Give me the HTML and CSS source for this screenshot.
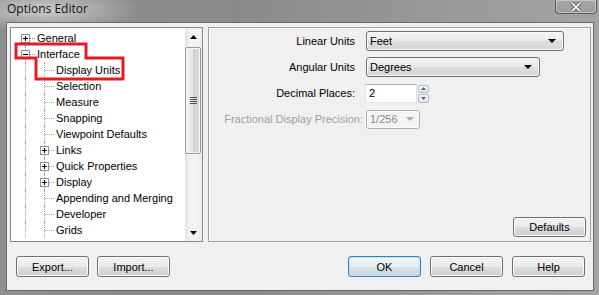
FILE: index.html
```html
<!DOCTYPE html>
<html lang="en">
<head>
  <meta charset="UTF-8">
  <title>Options Editor</title>
  <link rel="stylesheet" href="styles.css">
</head>
<body>

  <div class="window">
    <div class="titlebar">
      <span class="title">Options Editor</span>
      <div class="close">
        <svg width="14" height="10" viewBox="0 0 14 10">
          <path d="M3 1 L11 9 M11 1 L3 9" stroke="#4a4a4a" stroke-width="3.4" fill="none"/>
          <path d="M3 1 L11 9 M11 1 L3 9" stroke="#f4f4f4" stroke-width="1.8" fill="none"/>
        </svg>
      </div>
    </div>

    <div class="client">
      <div class="panels">

        <!-- options tree -->
        <div class="tree">
          <div class="tree-list">
            <div class="node"><span class="cell down h"><svg class="box" width="9" height="9"><rect x="0.5" y="0.5" width="8" height="8" fill="#fff" stroke="#919191"/><path d="M2 4.5h5M4.5 2v5" stroke="#000"/></svg></span><span class="label">General</span></div>
            <div class="node"><span class="cell v h"><svg class="box" width="9" height="9"><rect x="0.5" y="0.5" width="8" height="8" fill="#fff" stroke="#919191"/><path d="M2 4.5h5" stroke="#000"/></svg></span><span class="label">Interface</span></div>
            <div class="node"><span class="cell v"></span><span class="cell v h"></span><span class="label">Display Units</span></div>
            <div class="node"><span class="cell v"></span><span class="cell v h"></span><span class="label">Selection</span></div>
            <div class="node"><span class="cell v"></span><span class="cell v h"></span><span class="label">Measure</span></div>
            <div class="node"><span class="cell v"></span><span class="cell v h"></span><span class="label">Snapping</span></div>
            <div class="node"><span class="cell v"></span><span class="cell v h"></span><span class="label">Viewpoint Defaults</span></div>
            <div class="node"><span class="cell v"></span><span class="cell v h"><svg class="box" width="9" height="9"><rect x="0.5" y="0.5" width="8" height="8" fill="#fff" stroke="#919191"/><path d="M2 4.5h5M4.5 2v5" stroke="#000"/></svg></span><span class="label">Links</span></div>
            <div class="node"><span class="cell v"></span><span class="cell v h"><svg class="box" width="9" height="9"><rect x="0.5" y="0.5" width="8" height="8" fill="#fff" stroke="#919191"/><path d="M2 4.5h5M4.5 2v5" stroke="#000"/></svg></span><span class="label">Quick Properties</span></div>
            <div class="node"><span class="cell v"></span><span class="cell v h"><svg class="box" width="9" height="9"><rect x="0.5" y="0.5" width="8" height="8" fill="#fff" stroke="#919191"/><path d="M2 4.5h5M4.5 2v5" stroke="#000"/></svg></span><span class="label">Display</span></div>
            <div class="node"><span class="cell v"></span><span class="cell v h"></span><span class="label">Appending and Merging</span></div>
            <div class="node"><span class="cell v"></span><span class="cell v h"></span><span class="label">Developer</span></div>
            <div class="node"><span class="cell v"></span><span class="cell v h"></span><span class="label">Grids</span></div>
          </div>

          <div class="scrollbar">
            <div class="arrow"><svg width="7" height="4"><path d="M0 4h7L3.5 0z" fill="#000"/></svg></div>
            <div class="track">
              <div class="thumb"><span class="grip"></span></div>
            </div>
            <div class="arrow"><svg width="7" height="4"><path d="M0 0h7L3.5 4z" fill="#000"/></svg></div>
          </div>

          <!-- red markup drawn over the tree -->
          <svg class="mark" width="193" height="215">
            <path d="M6 17H76V31H113V52H26V31H6Z" fill="none" stroke="#e31b23" stroke-width="3"/>
          </svg>
        </div>

        <!-- settings page -->
        <div class="page">
          <div class="form">
            <div class="row">
              <span class="field-label">Linear Units</span>
              <div class="combo combo-linear"><span>Feet</span><svg width="8" height="4"><path d="M0 0h8L4 4z" fill="#000"/></svg></div>
            </div>
            <div class="row">
              <span class="field-label">Angular Units</span>
              <div class="combo combo-angular"><span>Degrees</span><svg width="8" height="4"><path d="M0 0h8L4 4z" fill="#000"/></svg></div>
            </div>
            <div class="row">
              <span class="field-label">Decimal Places:</span>
              <div class="spin">
                <div class="spin-input">2</div>
                <div class="spin-buttons">
                  <div class="spin-btn"><svg width="5" height="3"><path d="M0 3h5L2.5 0z" fill="#4d6185"/></svg></div>
                  <div class="spin-btn"><svg width="5" height="3"><path d="M0 0h5L2.5 3z" fill="#4d6185"/></svg></div>
                </div>
              </div>
            </div>
            <div class="row">
              <span class="field-label disabled wide">Fractional Display Precision:</span>
              <div class="combo combo-disabled"><span>1/256</span><svg width="8" height="4"><path d="M0 0h8L4 4z" fill="#a8a8a8"/></svg></div>
            </div>
          </div>

          <div class="page-foot">
            <button class="btn">Defaults</button>
          </div>
        </div>
      </div>

      <div class="buttons">
        <div class="group">
          <button class="btn">Export...</button>
          <button class="btn">Import...</button>
        </div>
        <div class="group">
          <button class="btn default">OK</button>
          <button class="btn">Cancel</button>
          <button class="btn">Help</button>
        </div>
      </div>
    </div>
  </div>

</body>
</html>
```

FILE: styles.css
```css
/* General Styles */
* {
  margin: 0;
  padding: 0;
  box-sizing: border-box;
  font-family: "Liberation Sans", Arial, sans-serif;
}

body {
  width: 599px;
  height: 295px;
  overflow: hidden;
  background-color: #8c8c8c;
}

/* Window frame */
.window {
  width: 599px;
  height: 295px;
  display: flex;
  flex-direction: column;
  padding: 0 5px 4px 6px;
  background:
    radial-gradient(ellipse 95px 22px at 45px 10px, rgba(225, 225, 225, 0.75), rgba(225, 225, 225, 0) 100%),
    linear-gradient(to right, #8e8e8e 0%, #8a8a8a 40%, #9a9a9a 75%, #a3a3a3 100%);
}

.titlebar {
  height: 22px;
  flex: none;
  display: flex;
  justify-content: space-between;
  align-items: flex-start;
}

.title {
  font-family: "Open Sans", "Liberation Sans", sans-serif;
  font-size: 12px;
  line-height: 18px;
  margin-left: 1px;
  color: #111;
}

.close {
  width: 42px;
  height: 14px;
  margin-right: -3px;
  border: 1px solid #5e5e5e;
  border-top: none;
  border-radius: 0 0 4px 4px;
  background: linear-gradient(#a6a6a6, #9d9d9d);
  box-shadow: inset 0 0 0 1px rgba(235, 235, 235, 0.45);
  display: flex;
  justify-content: center;
  align-items: center;
}

/* Client area */
.client {
  flex: 1;
  background-color: #f0f0f0;
  border: 1px solid #6a6a6a;
  padding: 4px 2px 0 3px;
  display: flex;
  flex-direction: column;
}

.panels {
  height: 215px;
  display: flex;
  gap: 5px;
}

/* Tree */
.tree {
  position: relative;
  width: 193px;
  background-color: white;
  border: 1px solid #828790;
  display: flex;
}

.tree-list {
  flex: 1;
  padding: 2px 0 0 5px;
  overflow: hidden;
}

.node {
  display: flex;
  height: 16px;
  font-size: 11px;
  line-height: 16px;
  color: #000;
}

.cell {
  position: relative;
  width: 19px;
  height: 16px;
  flex: none;
}

.cell.v::before,
.cell.down::before {
  content: "";
  position: absolute;
  left: 9px;
  top: 0;
  bottom: 0;
  border-left: 1px dotted #a0a0a0;
}

.cell.down::before {
  top: 8px;
}

.cell.h::after {
  content: "";
  position: absolute;
  left: 10px;
  right: 0;
  top: 8px;
  border-top: 1px dotted #a0a0a0;
}

.box {
  position: absolute;
  left: 5px;
  top: 4px;
  z-index: 1;
}

.label {
  margin-left: 2px;
  white-space: nowrap;
}

.scrollbar {
  width: 17px;
  flex: none;
  display: flex;
  flex-direction: column;
  background: linear-gradient(to right, #e3e3e3, #f3f3f3 30%, #f3f3f3 70%, #ececec);
}

.arrow {
  height: 17px;
  flex: none;
  display: flex;
  justify-content: center;
  align-items: center;
}

.track {
  flex: 1;
  padding-top: 2px;
}

.thumb {
  margin: 0 1px 0 0;
  height: 107px;
  border: 1px solid #979797;
  border-radius: 2px;
  background: linear-gradient(to right, #f1f1f1, #e4e4e4 50%, #d2d2d2 51%, #dadada);
  box-shadow: inset 0 0 0 1px #f8f8f8;
  display: flex;
  justify-content: center;
  align-items: center;
}

.grip {
  width: 7px;
  height: 7px;
  background: repeating-linear-gradient(#555 0, #555 1px, transparent 1px, transparent 2px);
}

.mark {
  position: absolute;
  left: -1px;
  top: -1px;
  z-index: 2;
  pointer-events: none;
}

/* Settings page */
.page {
  width: 383px;
  border: 1px solid #a0a0a0;
  box-shadow: inset 1px 1px 0 #ffffff;
  display: flex;
  flex-direction: column;
  justify-content: space-between;
}

.form {
  padding-top: 3px;
  display: flex;
  flex-direction: column;
  gap: 6px;
}

.row {
  display: flex;
  align-items: center;
  height: 20px;
  font-size: 11px;
}

.field-label {
  width: 154px;
  padding-right: 8px;
  margin-right: 3px;
  text-align: right;
  white-space: nowrap;
  color: #000;
}

.field-label.wide {
  padding-right: 0;
}

.field-label.disabled {
  color: #a0a0a0;
}

.combo {
  height: 20px;
  border: 1px solid #707070;
  border-radius: 3px;
  background: linear-gradient(#f2f2f2 0%, #ebebeb 50%, #dddddd 51%, #d6d6d6 100%);
  box-shadow: inset 0 0 0 1px #fafafa;
  display: flex;
  align-items: center;
  justify-content: space-between;
  padding: 0 7px 0 3px;
  color: #000;
}

.combo-linear {
  width: 198px;
}

.combo-angular {
  width: 174px;
}

.combo-disabled {
  width: 54px;
  height: 19px;
  border-color: #adb2b5;
  background: #f4f4f4;
  color: #8a8a8a;
  padding-right: 5px;
}

.spin {
  display: flex;
  height: 19px;
  margin-left: -1px;
}

.spin-input {
  width: 52px;
  background-color: white;
  border: 1px solid #abadb3;
  border-color: #abadb3 #dbdfe6 #e3e9ef #e2e3ea;
  padding-left: 3px;
  line-height: 16px;
}

.spin-buttons {
  width: 11px;
  display: flex;
  flex-direction: column;
  gap: 1px;
  padding-top: 1px;
  margin-left: 1px;
}

.spin-btn {
  flex: 1;
  border: 1px solid #b4bac4;
  border-radius: 2px;
  background: linear-gradient(#f6f8fa, #e2e6ec);
  display: flex;
  justify-content: center;
  align-items: center;
}

.page-foot {
  display: flex;
  justify-content: flex-end;
  padding: 0 4px 4px 0;
}

/* Buttons */
.btn {
  width: 73px;
  height: 21px;
  font-size: 11px;
  color: #000;
  border: 1px solid #707070;
  border-radius: 3px;
  background: linear-gradient(#f2f2f2 0%, #ebebeb 50%, #dddddd 51%, #cfcfcf 100%);
  box-shadow: inset 0 0 0 1px #fcfcfc;
  cursor: pointer;
}

.page-foot .btn {
  height: 20px;
}

.btn.default {
  border-color: #3c7fb1;
  box-shadow: inset 0 0 0 1px #b6e4fb;
  background: linear-gradient(#eaf6fd 0%, #e0f1fb 50%, #d3ebf9 51%, #c6e4f6 100%);
  background: linear-gradient(#f0f4f7 0%, #e8eef2 50%, #d9e1e7 51%, #ccd6de 100%);
}

.buttons {
  display: flex;
  justify-content: space-between;
  margin-top: 14px;
  padding: 0 6px;
}

.group {
  display: flex;
  gap: 8px;
}

.group + .group {
  gap: 9px;
}
```
